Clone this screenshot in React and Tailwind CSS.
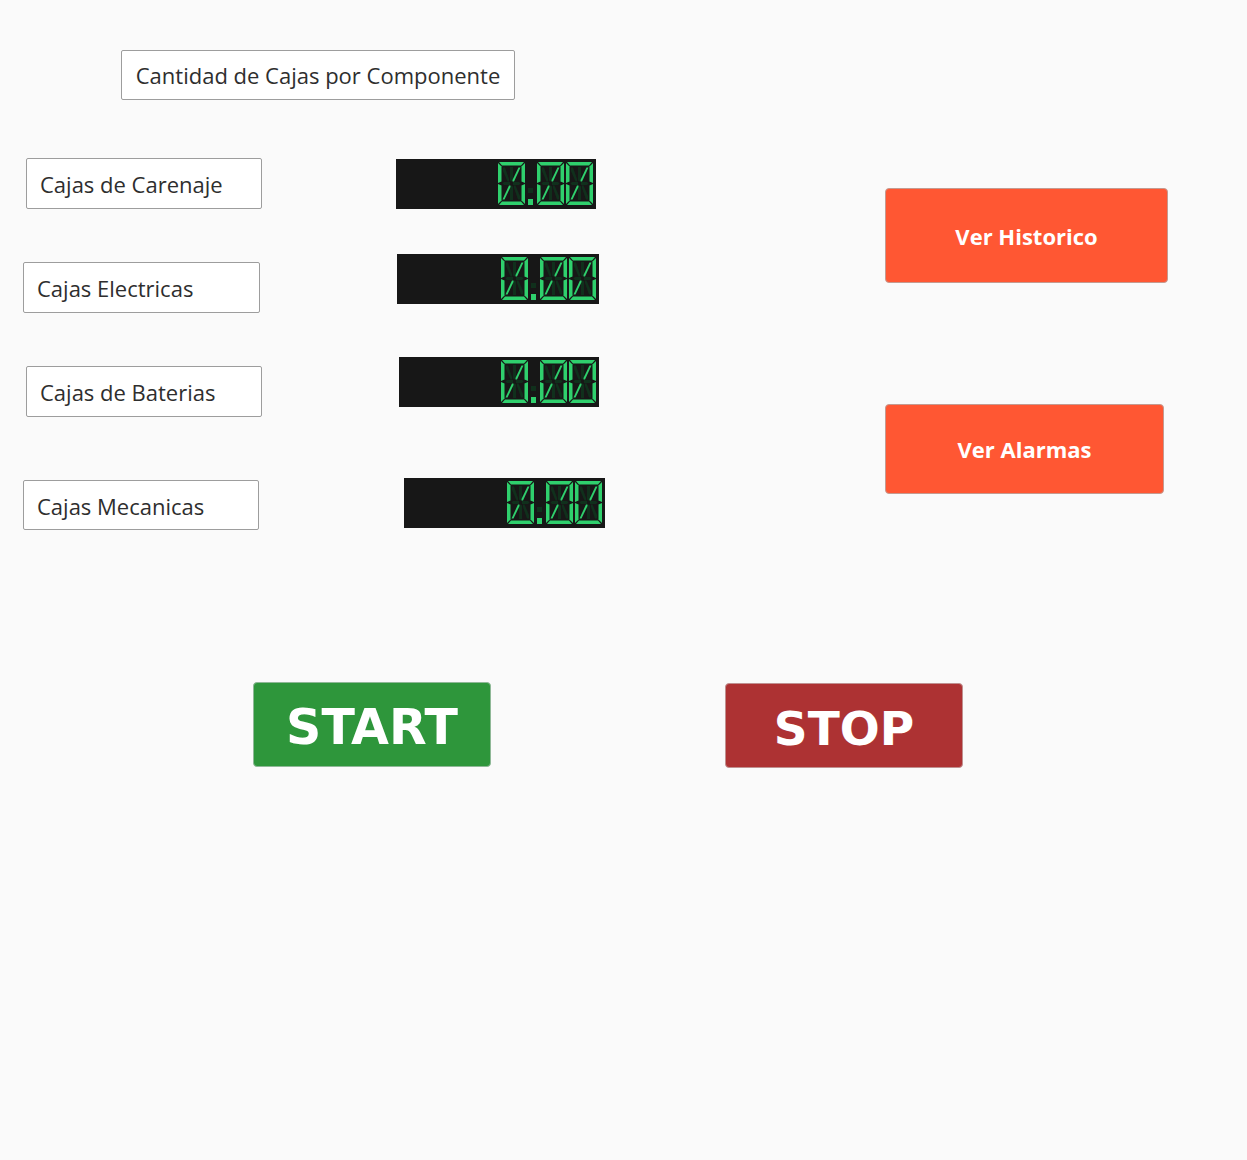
const ON = '#2fd06d'
const OFF = '#10301c'

function Digit({ x }) {
  const lit = [
    '1,0 26,0 23,3.5 4,3.5',
    '1,43 26,43 23,39.5 4,39.5',
    '0,1 3.5,4.5 3.5,19.5 0,21',
    '0,22 3.5,23.5 3.5,38.5 0,42',
    '27,1 23.5,4.5 23.5,19.5 27,21',
    '27,22 23.5,23.5 23.5,38.5 27,42',
    '20.5,5.5 22.5,5.5 16,19.5 14.5,19.5 14.5,18',
    '12.5,23.5 12.5,25 6.5,37.5 4.5,37.5 11,23.5',
  ]
  const dim = [
    '4.5,21.5 6,20 12,20 12,23 6,23',
    '22.5,21.5 21,20 15,20 15,23 21,23',
    '12,5 15,5 15,18.5 13.5,19.5 12,18.5',
    '12,24.5 13.5,23.5 15,24.5 15,38 12,38',
    '5,5.5 7,5.5 11,17 11,19.5 9.5,19.5 5,9',
    '22,37.5 20,37.5 16,26 16,23.5 17.5,23.5 22,34',
  ]
  return (
    <g transform={`translate(${x},0)`}>
      {dim.map((p, i) => <polygon key={'d' + i} points={p} fill={OFF} />)}
      {lit.map((p, i) => <polygon key={'l' + i} points={p} fill={ON} />)}
    </g>
  )
}

function Display({ className }) {
  return (
    <div className={`w-[200px] h-[50px] bg-[#171717] flex items-center justify-end pr-[2px] ${className}`}>
      <svg width="96" height="44" viewBox="0 0 96 44">
        <Digit x={0} />
        <rect x="30" y="26" width="5" height="5" fill={OFF} />
        <rect x="30" y="37" width="5" height="6" fill={ON} />
        <Digit x={39} />
        <Digit x={68} />
      </svg>
    </div>
  )
}

function Label({ children, className }) {
  return (
    <div className={`w-[236px] bg-white border border-[#9d9d9d] rounded-[2px] flex items-center px-[13px] pt-[2px] text-[22px] text-[#2e2e2e] ${className}`}>
      {children}
    </div>
  )
}

export default function App() {
  return (
    <div className="min-h-[1160px] bg-[#fafafa] font-['Open_Sans',sans-serif]">
      <div className="flex items-start">
        <div className="w-[620px] flex flex-col">
          <div className="mt-[50px] ml-[121px] w-[394px] h-[50px] bg-white border border-[#9d9d9d] rounded-[2px] flex items-center justify-center pt-[1px] text-[22px] text-[#2e2e2e]">
            Cantidad de Cajas por Componente
          </div>

          <div className="mt-[58px] flex items-start">
            <Label className="ml-[26px] h-[51px]">Cajas de Carenaje</Label>
            <Display className="ml-[134px] mt-[1px]" />
          </div>

          <div className="mt-[45px] flex items-start">
            <Label className="ml-[23px] mt-[8px] h-[51px] w-[237px]">Cajas Electricas</Label>
            <Display className="ml-[137px] w-[202px]" />
          </div>

          <div className="mt-[44px] flex items-start">
            <Label className="ml-[26px] mt-[9px] h-[51px]">Cajas de Baterias</Label>
            <Display className="ml-[137px]" />
          </div>

          <div className="mt-[61px] flex items-start">
            <Label className="ml-[23px] mt-[2px] h-[50px]">Cajas Mecanicas</Label>
            <Display className="ml-[145px] w-[201px]" />
          </div>
        </div>

        <div className="ml-[265px] mt-[188px] flex flex-col">
          <button className="w-[283px] h-[95px] pt-[2px] bg-[#ff5733] border border-[#c49a90] rounded-[4px] text-white font-bold text-[22px]">
            Ver Historico
          </button>
          <button className="mt-[121px] w-[279px] h-[90px] bg-[#ff5733] border border-[#c49a90] rounded-[4px] text-white font-bold text-[22px]">
            Ver Alarmas
          </button>
        </div>
      </div>

      <div className="mt-[152px] flex items-start font-['DejaVu_Sans',sans-serif]">
        <button className="ml-[253px] w-[238px] h-[85px] pt-[5px] bg-[#2e963b] border border-[#8fb897] rounded-[4px] text-white font-bold text-[49px] leading-none">
          START
        </button>
        <button className="ml-[234px] mt-[1px] w-[238px] h-[85px] pt-[5px] bg-[#ad3233] border border-[#c09090] rounded-[4px] text-white font-bold text-[47px] leading-none">
          STOP
        </button>
      </div>
    </div>
  )
}
